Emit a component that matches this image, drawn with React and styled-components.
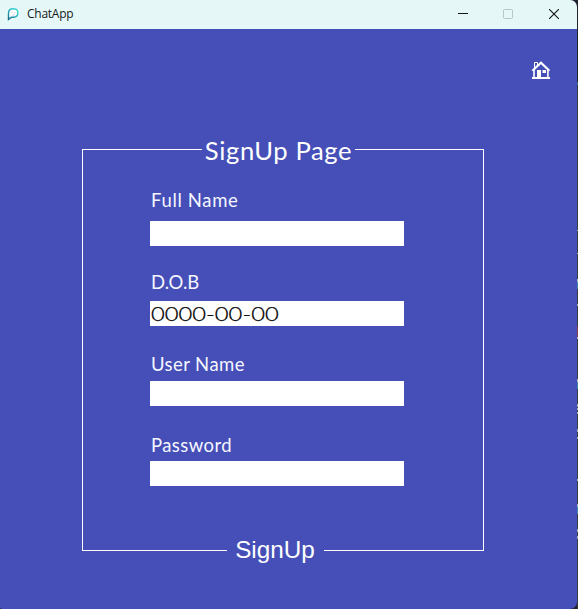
import React from "react";
import styled, { createGlobalStyle } from "styled-components";

const GlobalStyle = createGlobalStyle`
  * { box-sizing: border-box; }
  body { margin: 0; background: #303236; overflow: hidden; }
`;

const Desktop = styled.div`
  display: flex;
  width: 578px;
  height: 609px;
  background: #20242a;
`;

const Window = styled.main`
  display: flex;
  flex-direction: column;
  width: 577px;
  height: 609px;
  overflow: hidden;
  border-radius: 0 7px 7px 2px;
  background: #454fb7;
`;

const Sliver = styled.div`
  width: 1px;
  height: 609px;
  background: linear-gradient(
    #20242a 0 82px, #3c6a86 82px 85px, #393b42 85px 230px,
    #a9abb8 230px 231px, #393b42 231px 253px, #a9abb8 253px 254px,
    #393b42 254px 279px, #b0b2bd 279px 282px, #3d84ad 282px 289px,
    #393b42 289px 304px, #a9abb8 304px 306px, #393b42 306px 326px,
    #8c3d4c 326px 337px, #a9abb8 337px 339px, #393b42 339px 379px,
    #b0b2bd 379px 382px, #3d84ad 382px 389px, #393b42 389px 404px,
    #a9abb8 404px 407px, #393b42 407px 408px, #a9abb8 408px 410px,
    #393b42 410px 412px, #a9abb8 412px 414px, #393b42 414px 429px,
    #a9abb8 429px 432px, #393b42 432px 437px, #a9abb8 437px 439px,
    #393b42 439px 479px, #a9abb8 479px 481px, #393b42 481px 504px,
    #b0b2bd 504px 507px, #3d84ad 507px 514px, #393b42 514px 529px,
    #a9abb8 529px 532px, #393b42 532px 536px, #a9abb8 536px 539px,
    #393b42 539px
  );
`;

const TitleBar = styled.header`
  display: flex;
  align-items: center;
  flex: none;
  height: 29px;
  padding-left: 7px;
  background: #e5f8f7;
`;

const AppTitle = styled.span`
  flex: 1;
  padding: 0 0 2px 7px;
  font: 12px/26px "Open Sans", sans-serif;
  letter-spacing: -0.25px;
  color: #151919;
`;

const Controls = styled.div`
  display: flex;
  height: 29px;
`;

const ControlButton = styled.button`
  display: flex;
  align-items: center;
  justify-content: center;
  width: ${(p) => p.$width}px;
  height: 27px;
  padding: 0 1px 0 0;
  border: 0;
  background: transparent;
  color: ${(p) => (p.$muted ? "#b6c7c6" : "#111515")};
`;

const Toolbar = styled.nav`
  display: flex;
  justify-content: flex-end;
  flex: none;
  height: 120px;
  padding: 32px 26px 0 0;
`;

const HomeButton = styled.button`
  width: 20px;
  height: 19px;
  padding: 0;
  border: 0;
  background: transparent;
  svg { display: block; }
`;

const Form = styled.form`
  display: flex;
  flex-direction: column;
  width: 402px;
  height: 402px;
  margin-left: 82px;
  border: solid #fff;
  border-width: 0 1px;
`;

const Edge = styled.div`
  display: flex;
  align-items: ${(p) => (p.$bottom ? "flex-end" : "flex-start")};
  height: 1px;
`;

const Line = styled.span`
  width: ${(p) => p.$width}px;
  height: 1px;
  background: #fff;
`;

const Heading = styled.h1`
  flex: 1;
  margin: -16px 0 0;
  text-align: center;
  white-space: nowrap;
  font: 400 25.6px/34px Lato, sans-serif;
  letter-spacing: 0.6px;
  color: #fff;
`;

const SubmitButton = styled.button`
  flex: 1;
  height: 30px;
  margin-bottom: -14px;
  padding: 0 1px 0 0;
  border: 0;
  background: transparent;
  font: 24.3px/30px "Liberation Sans", Arial, sans-serif;
  color: #fff;
`;

const Fields = styled.div`
  flex: 1;
  padding: 37px 0 0 67px;
`;

const Field = styled.label`
  display: flex;
  flex-direction: column;
  justify-content: space-between;
  width: 254px;
  height: ${(p) => p.$height}px;
  margin-bottom: ${(p) => p.$after}px;
`;

const LabelText = styled.span`
  padding-left: 1px;
  font: 18.5px/26px Lato, sans-serif;
  letter-spacing: ${(p) => p.$tracking}px;
  color: #f5f6ff;
`;

const Input = styled.span`
  display: block;
  height: 25px;
  padding-left: 1px;
  background: #fff;
`;

const Value = styled.span`
  display: inline-block;
  font: 300 19.8px/25px Lato, sans-serif;
  -webkit-text-stroke: 0.25px #000;
  color: #000;
  transform: scaleX(1.2);
  transform-origin: left;
`;

const fields = [
  { label: "Full Name", height: 59, after: 23, tracking: 0.65 },
  { label: "D.O.B", height: 57, after: 25, tracking: 0, value: "0000-00-00" },
  { label: "User Name", height: 55, after: 26, tracking: 0.42 },
  { label: "Password", height: 54, after: 0, tracking: 0.42 },
];

function ChatIcon() {
  return (
    <svg width="13" height="14" viewBox="0 0 13 14" fill="none">
      <defs>
        <linearGradient id="bubble" x1="1" y1="12" x2="9" y2="2" gradientUnits="userSpaceOnUse">
          <stop stopColor="#125c84" />
          <stop offset="0.5" stopColor="#1f9fb4" />
          <stop offset="1" stopColor="#3fd2d2" />
        </linearGradient>
      </defs>
      <path d="M1.5 11.3V5.2C1.5 2.1 3.7.8 6.3.8s4.6 1.5 4.6 4c0 2.8-2 4.4-4.4 4.4H4.4L1.5 11.3Z" fill="#fff" stroke="url(#bubble)" strokeWidth="1.4" />
      <path d="M4.9 4v1.2M7.7 4v1.2M5 6.9q1.4.6 2.7 0" stroke="#a9b5b7" strokeWidth="0.6" />
    </svg>
  );
}

function HomeIcon() {
  return (
    <svg width="20" height="19" viewBox="0 0 20 19" fill="none">
      <path d="M3.5 7V1.5h3V4" stroke="#fff" strokeWidth="1" />
      <path d="M1.4 9.8 10 1.8l8.4 8" stroke="#fff" strokeWidth="2.2" />
      <path d="M3 9v8M16.9 9v8" stroke="#fff" strokeWidth="1.6" />
      <path d="M1 16h18v2H1zM6 9h4v8H6zM11.5 9H15v3h-3.5z" fill="#fff" />
    </svg>
  );
}

export default function App() {
  return (
    <>
      <GlobalStyle />
      <Desktop>
        <Window>
          <TitleBar>
            <ChatIcon />
            <AppTitle>ChatApp</AppTitle>
            <Controls>
              <ControlButton $width={46} aria-label="Minimize">
                <svg width="10" height="10"><path d="M0 4.5h10" stroke="currentColor" /></svg>
              </ControlButton>
              <ControlButton $width={45} $muted aria-label="Maximize">
                <svg width="10" height="10"><rect x="0.5" y="0.5" width="9" height="9" rx="1" fill="none" stroke="currentColor" /></svg>
              </ControlButton>
              <ControlButton $width={46} aria-label="Close">
                <svg width="10" height="10"><path d="m0 0 10 10M10 0 0 10" stroke="currentColor" strokeWidth="1.1" /></svg>
              </ControlButton>
            </Controls>
          </TitleBar>
          <Toolbar>
            <HomeButton aria-label="Home"><HomeIcon /></HomeButton>
          </Toolbar>
          <Form>
            <Edge>
              <Line $width={119} />
              <Heading>SignUp Page</Heading>
              <Line $width={128} />
            </Edge>
            <Fields>
              {fields.map((f) => (
                <Field key={f.label} $height={f.height} $after={f.after}>
                  <LabelText $tracking={f.tracking}>{f.label}</LabelText>
                  <Input>{f.value && <Value>{f.value}</Value>}</Input>
                </Field>
              ))}
            </Fields>
            <Edge $bottom>
              <Line $width={144} />
              <SubmitButton type="button">SignUp</SubmitButton>
              <Line $width={159} />
            </Edge>
          </Form>
        </Window>
        <Sliver />
      </Desktop>
    </>
  );
}
